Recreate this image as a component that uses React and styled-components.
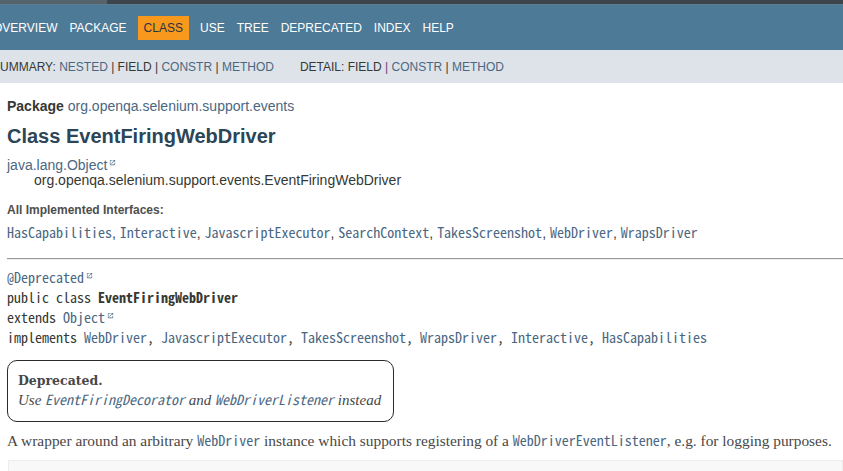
import React from "react";
import styled, { createGlobalStyle } from "styled-components";

const MONO = `"Noto Sans Mono CJK KR", "Noto Sans Mono CJK SC", "Liberation Mono", monospace`;
const SERIF = `"Liberation Serif", "Times New Roman", serif`;

const GlobalStyle = createGlobalStyle`
  html, body {
    margin: 0;
    padding: 0;
    background: #ffffff;
  }
  body {
    font-family: "Liberation Sans", Arial, sans-serif;
    font-size: 14px;
    color: #353833;
    overflow: hidden;
  }
  * {
    box-sizing: border-box;
  }
`;

const navItems = ["Overview", "Package", "Class", "Use", "Tree", "Deprecated", "Index", "Help"];

const interfaces = [
  "HasCapabilities",
  "Interactive",
  "JavascriptExecutor",
  "SearchContext",
  "TakesScreenshot",
  "WebDriver",
  "WrapsDriver",
];

const implemented = [
  "WebDriver",
  "JavascriptExecutor",
  "TakesScreenshot",
  "WrapsDriver",
  "Interactive",
  "HasCapabilities",
];

const ExtLink = () => (
  <ExtIcon viewBox="0 0 24 24" aria-hidden="true">
    <path d="M19 19H5V5h7V3H5a2 2 0 00-2 2v14a2 2 0 002 2h14c1.1 0 2-.9 2-2v-7h-2v7zM14 3v2h3.59l-9.83 9.83 1.41 1.41L19 6.41V10h2V3h-7z" />
  </ExtIcon>
);

const App = () => {
  return (
    <>
      <GlobalStyle />
      <TopStrip>
        <StripLeft />
        <StripRight />
      </TopStrip>
      <TopNav>
        <NavList>
          {navItems.map((item) => (
            <NavItem key={item} $active={item === "Class"}>
              {item}
            </NavItem>
          ))}
        </NavList>
      </TopNav>
      <SubNav>
        <SubGroup>
          <span>Summary:&nbsp;</span>
          <SubLink>Nested</SubLink>
          <span>&nbsp;|&nbsp;</span>
          <span>Field</span>
          <span>&nbsp;|&nbsp;</span>
          <SubLink>Constr</SubLink>
          <span>&nbsp;|&nbsp;</span>
          <SubLink>Method</SubLink>
        </SubGroup>
        <SubGroup>
          <span>Detail:&nbsp;</span>
          <span>Field</span>
          <Visited>&nbsp;|&nbsp;</Visited>
          <SubLink>Constr</SubLink>
          <span>&nbsp;|&nbsp;</span>
          <SubLink>Method</SubLink>
        </SubGroup>
      </SubNav>

      <Content>
        <PackageLine>
          <strong>Package</strong> <Link>org.openqa.selenium.support.events</Link>
        </PackageLine>
        <Title>Class EventFiringWebDriver</Title>
        <Inheritance>
          <div>
            <Link>java.lang.Object</Link>
            <ExtLink />
          </div>
          <Indented>org.openqa.selenium.support.events.EventFiringWebDriver</Indented>
        </Inheritance>

        <NotesLabel>All Implemented Interfaces:</NotesLabel>
        <NotesValue>
          {interfaces.map((name, i) => (
            <React.Fragment key={name}>
              <CodeLink>{name}</CodeLink>
              {i < interfaces.length - 1 && ", "}
            </React.Fragment>
          ))}
        </NotesValue>

        <Rule />

        <Signature>
          <div>
            <CodeLink>@Deprecated</CodeLink>
            <ExtLink />
          </div>
          <div>
            public class <TypeName>EventFiringWebDriver</TypeName>
          </div>
          <div>
            extends <CodeLink>Object</CodeLink>
            <ExtLink />
          </div>
          <div>
            implements{" "}
            {implemented.map((name, i) => (
              <React.Fragment key={name}>
                <CodeLink>{name}</CodeLink>
                {i < implemented.length - 1 && ", "}
              </React.Fragment>
            ))}
          </div>
        </Signature>

        <DeprecationBlock>
          <DeprecatedLabel>Deprecated.</DeprecatedLabel>
          <DeprecationComment>
            Use <ItalicCode>EventFiringDecorator</ItalicCode> and{" "}
            <ItalicCode>WebDriverListener</ItalicCode> instead
          </DeprecationComment>
        </DeprecationBlock>

        <Description>
          A wrapper around an arbitrary <CodeLink>WebDriver</CodeLink> instance which supports
          registering of a <CodeLink>WebDriverEventListener</CodeLink>, e.g. for logging purposes.
        </Description>

        <SummarySection />
      </Content>
    </>
  );
};

const TopStrip = styled.div`
  display: flex;
  height: 5px;
  border-bottom: 1px solid #5f7d90;
`;
const StripLeft = styled.div`
  width: 107px;
  background-color: #55636d;
`;
const StripRight = styled.div`
  flex: 1;
  background-color: #3c454c;
`;
const TopNav = styled.nav`
  height: 45px;
  background-color: #4d7a97;
  overflow: hidden;
  display: flex;
  align-items: center;
`;
const NavList = styled.ul`
  display: flex;
  align-items: center;
  list-style: none;
  margin: 0 0 0 -13px;
  padding: 0;
`;
const NavItem = styled.li`
  padding: 5px 6px;
  font-size: 12px;
  line-height: 14px;
  white-space: nowrap;
  text-transform: uppercase;
  color: ${(p) => (p.$active ? "#253441" : "#ffffff")};
  background-color: ${(p) => (p.$active ? "#f8981d" : "transparent")};
  margin: ${(p) => (p.$active ? "0 5px" : "0")};
`;
const SubNav = styled.div`
  height: 33px;
  background-color: #dee3e9;
  display: flex;
  align-items: center;
  margin-left: -8px;
  font-size: 12px;
  text-transform: uppercase;
  white-space: nowrap;
  color: #353833;
`;
const SubGroup = styled.div`
  display: flex;
  margin-right: 26px;
`;
const SubLink = styled.span`
  color: #4a6782;
`;
const Visited = styled.span`
  color: #6b3f73;
`;
const Content = styled.main`
  padding-left: 7px;
`;
const PackageLine = styled.div`
  margin-top: 14px;
  line-height: 18px;
  font-size: 14px;
  strong {
    font-weight: bold;
  }
`;
const Link = styled.span`
  color: #4a6782;
`;
const Title = styled.h1`
  margin: 9px 0 0;
  font-size: 20px;
  line-height: 24px;
  font-weight: bold;
  color: #2c4557;
`;
const Inheritance = styled.div`
  margin-top: 10px;
  line-height: 15px;
`;
const Indented = styled.div`
  padding-left: 27px;
`;
const ExtIcon = styled.svg`
  display: inline-block;
  width: 7px;
  height: 7px;
  margin-left: 2px;
  margin-bottom: 4px;
  fill: #4a6782;
`;
const NotesLabel = styled.div`
  margin-top: 15px;
  font-size: 12px;
  line-height: 14px;
  font-weight: bold;
  color: #4e4e4e;
`;
const NotesValue = styled.div`
  margin-top: 6px;
  line-height: 18px;
`;
const CodeLink = styled.code`
  font-family: ${MONO};
  font-size: 14px;
  color: #4a6782;
`;
const Rule = styled.hr`
  margin: 16px 0 0;
  border: none;
  border-top: 1px solid #9a9a9a;
  border-bottom: 1px solid #eeeeee;
`;
const Signature = styled.pre`
  margin: 7px 0 0;
  font-family: ${MONO};
  font-size: 14px;
  line-height: 20px;
  color: #353833;
`;
const TypeName = styled.span`
  font-weight: bold;
`;
const DeprecationBlock = styled.div`
  display: inline-block;
  margin-top: 13px;
  padding: 10px 12px 11px 10px;
  border: 1px solid #2a2a2a;
  border-radius: 10px;
  font-family: ${SERIF};
  color: #474747;
`;
const DeprecatedLabel = styled.div`
  font-family: "DejaVu Serif", Georgia, serif;
  font-size: 12.5px;
  font-weight: bold;
  line-height: 19px;
`;
const DeprecationComment = styled.div`
  font-style: italic;
  font-size: 15px;
  line-height: 19px;
`;
const ItalicCode = styled(CodeLink)`
  font-style: italic;
`;
const Description = styled.div`
  margin-top: 9px;
  font-family: ${SERIF};
  font-size: 15.4px;
  line-height: 19px;
  color: #474747;
  white-space: nowrap;
`;
const SummarySection = styled.div`
  margin: 10px 0 0 1px;
  height: 40px;
  background-color: #f8f8f8;
  border: 1px solid #ededed;
`;

export default App;
